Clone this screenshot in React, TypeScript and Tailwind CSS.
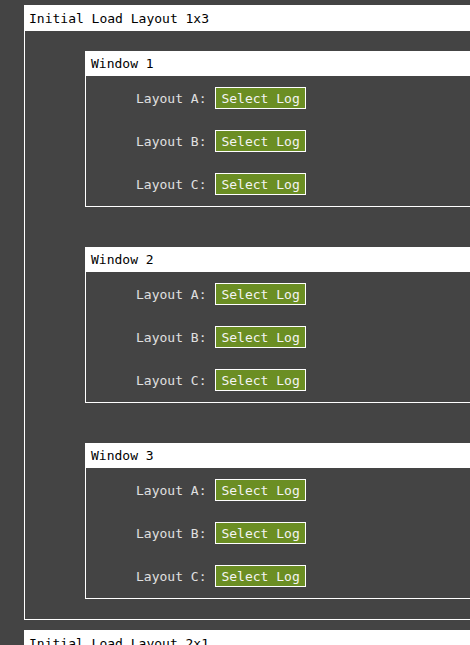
import React from "react";

const mono = { fontFamily: '"DejaVu Sans Mono", "Liberation Mono", monospace' };

function LogRow({ label }: { label: string }) {
  return (
    <div className="flex items-center gap-[9px]">
      <span className="text-[13px] leading-[17px] text-[#e0e0e0]">Layout {label}:</span>
      <button className="h-[22px] border border-white bg-[#6b8e23] px-[5px] text-[13px] leading-[17px] text-[#f4f4f4]">
        Select Log
      </button>
    </div>
  );
}

function LogWindow({ title }: { title: string }) {
  return (
    <div className="w-[500px] border border-white">
      <div className="h-[24px] bg-white px-[5px] text-[13px] leading-[24px] text-black">{title}</div>
      <div className="flex flex-col gap-[21px] pb-[11px] pl-[50px] pt-[11px]">
        <LogRow label="A" />
        <LogRow label="B" />
        <LogRow label="C" />
      </div>
    </div>
  );
}

function LayoutPanel({ title, windows }: { title: string; windows: string[] }) {
  return (
    <div className="w-[600px] border border-white">
      <div className="h-[25px] bg-white px-[4px] text-[13px] leading-[25px] text-black">{title}</div>
      <div className="flex flex-col gap-[40px] pb-[20px] pl-[60px] pt-[20px]">
        {windows.map((w) => (
          <LogWindow key={w} title={w} />
        ))}
      </div>
    </div>
  );
}

export default function App() {
  return (
    <div className="h-[645px] w-[470px] overflow-hidden bg-[#444444]" style={mono}>
      <div className="flex flex-col gap-[10px] pl-[24px] pt-[5px]">
        <LayoutPanel title="Initial Load Layout 1x3" windows={["Window 1", "Window 2", "Window 3"]} />
        <LayoutPanel title="Initial Load Layout 2x1" windows={["Window 1", "Window 2"]} />
      </div>
    </div>
  );
}
